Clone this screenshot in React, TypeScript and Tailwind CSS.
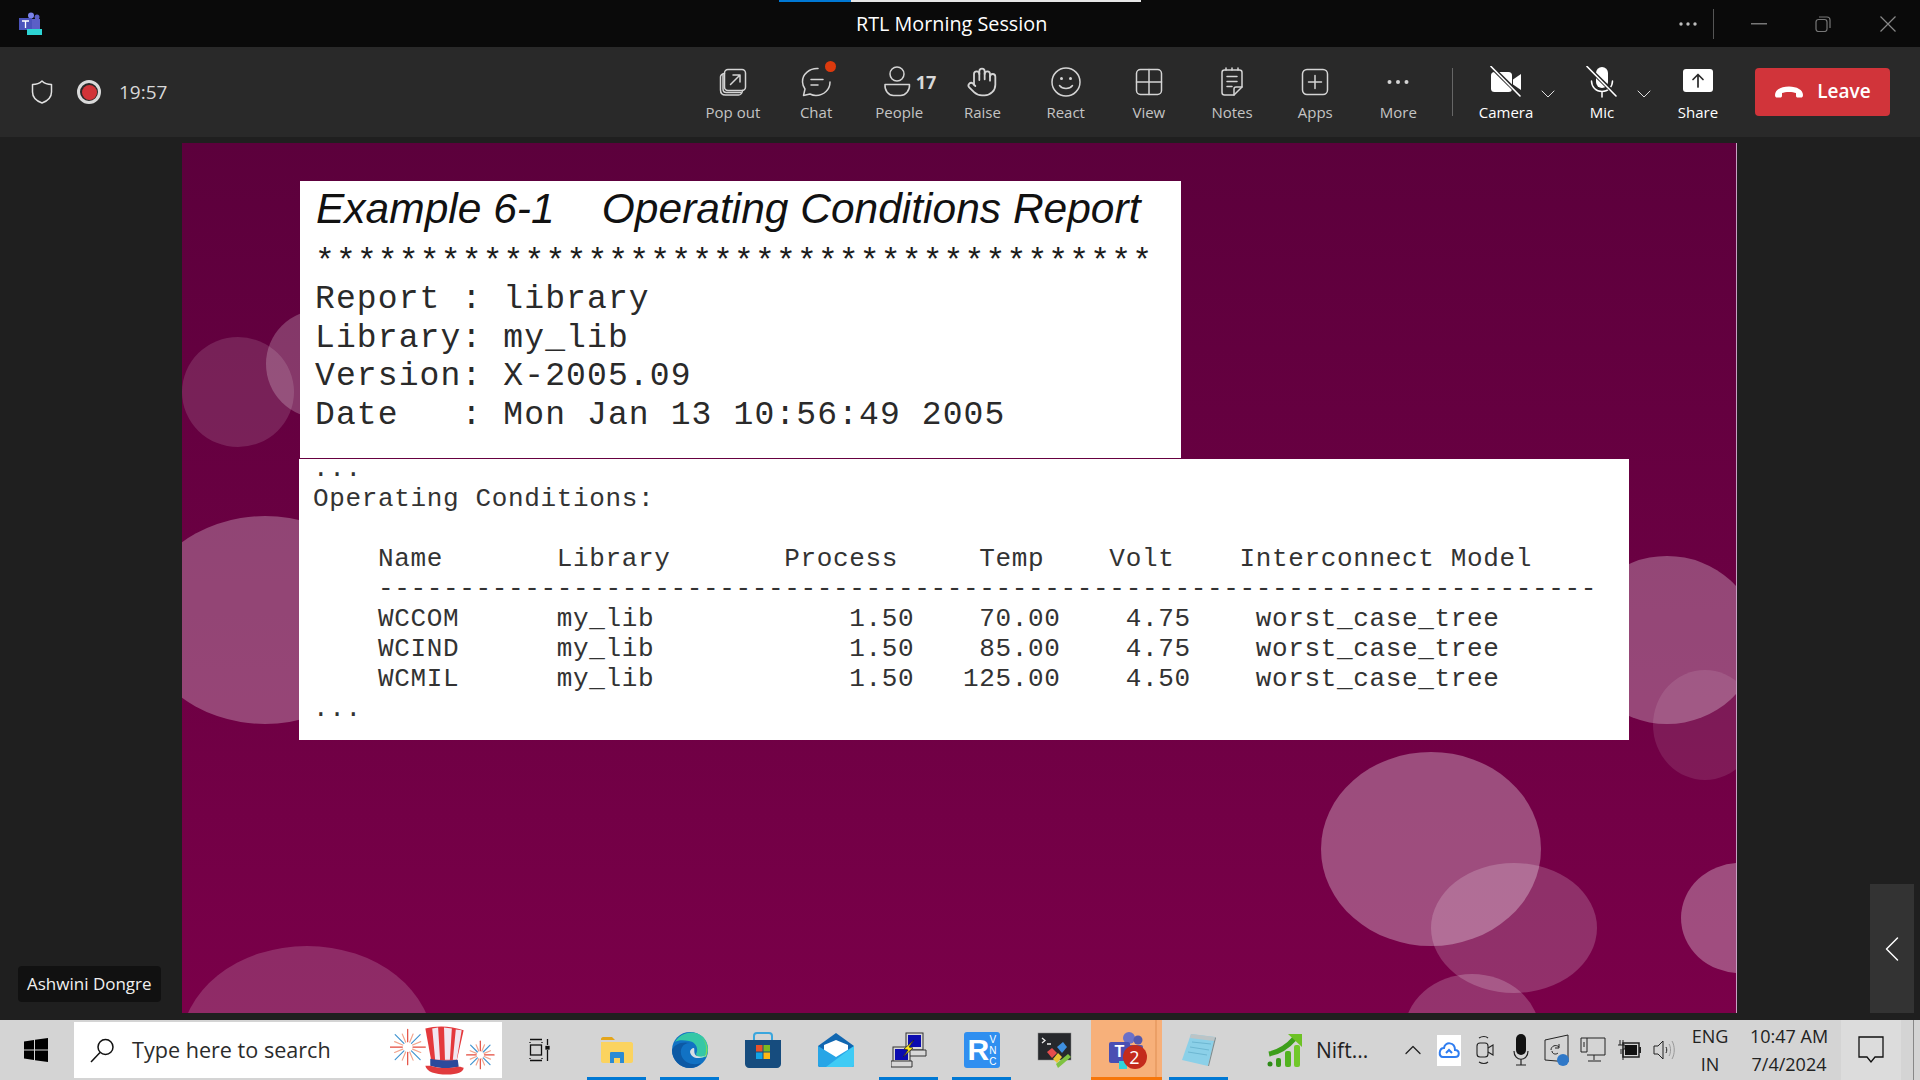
import { ReactNode } from "react";
import { ChevronLeft, ChevronDown, ChevronUp, Hand } from "lucide-react";

const stroke = "#d4d4d4";

function Ico({ children, w = 32, h = 32 }: { children: ReactNode; w?: number; h?: number }) {
  return (
    <svg width={w} height={h} viewBox={`0 0 ${w} ${h}`} fill="none" stroke={stroke} strokeWidth="1.5" strokeLinecap="round" strokeLinejoin="round">
      {children}
    </svg>
  );
}

const tools: { label: string; icon: ReactNode }[] = [
  {
    label: "Pop out",
    icon: (
      <Ico>
        <rect x="7.5" y="3.5" width="21" height="21" rx="3.5" />
        <path d="M7.5 7.5C5 8 3.5 9 3.5 11v13c0 3 2 5 5 5h13c2 0 3.5-1.5 4-4.5" />
        <path d="M6 9v14c0 2 1.500 3.500 3.500 3.500H24" />
        <path d="M13.500 18.500 23 9M16 9h7v7" />
      </Ico>
    ),
  },
  {
    label: "Chat",
    icon: (
      <div className="relative">
        <Ico>
          <path d="M18 2.500C10 2 2 8 2.500 16c.1 2.500 1 5 2.500 7L3.500 29.500 10 28c2 1 4 1.500 6 1.500 8 0 14-6 14-13.500" />
          <path d="M11 13.500h12M11 19h7" />
        </Ico>
        <span className="absolute right-[-4px] top-[-5px] h-[11px] w-[11px] rounded-full bg-[#dc3a0e]" />
      </div>
    ),
  },
  {
    label: "People",
    icon: (
      <div className="flex items-center gap-[5px] pl-[20px]">
        <Ico w={28}>
          <circle cx="14" cy="8" r="7" />
          <path d="M2 18.500h24.500c.5 6-4 11-9 11h-7c-5 0-9-5-8.500-11Z" />
        </Ico>
        <span className="w-[20px] text-[18px] leading-none font-bold text-[#d8d8d8]">17</span>
      </div>
    ),
  },
  { label: "Raise", icon: <Hand size={32} strokeWidth={1.35} color={stroke} /> },
  {
    label: "React",
    icon: (
      <Ico>
        <circle cx="16" cy="16" r="14" />
        <circle cx="11.500" cy="12.500" r="1.500" fill={stroke} stroke="none" />
        <circle cx="20.500" cy="12.500" r="1.500" fill={stroke} stroke="none" />
        <path d="M9.500 19.500c3 4 10 4 13 0" />
      </Ico>
    ),
  },
  {
    label: "View",
    icon: (
      <Ico>
        <rect x="3.500" y="3.500" width="25" height="25" rx="4" />
        <path d="M16 3.500v25M3.500 16h25" />
      </Ico>
    ),
  },
  {
    label: "Notes",
    icon: (
      <Ico>
        <path d="M18 29H8.500C7 29 6 28 6 26.500v-20C6 5 7 4 8.500 4h15C25 4 26 5 26 6.500V21l-8 8Z" />
        <path d="M10 2v2M16 2v2M22 2v2M11 10.500h10M11 15.500h10M11 20.500h5M18 29v-6c0-1 1-2 2-2h6" />
      </Ico>
    ),
  },
  {
    label: "Apps",
    icon: (
      <Ico>
        <rect x="3.500" y="3.500" width="25" height="25" rx="4.500" />
        <path d="M16 9.500v13M9.500 16h13" />
      </Ico>
    ),
  },
  {
    label: "More",
    icon: (
      <Ico>
        <circle cx="7.500" cy="16" r="2" fill={stroke} stroke="none" />
        <circle cx="16" cy="16" r="2" fill={stroke} stroke="none" />
        <circle cx="24.500" cy="16" r="2" fill={stroke} stroke="none" />
      </Ico>
    ),
  },
];

function CameraOff() {
  return (
    <svg width="32" height="32" viewBox="0 0 32 32">
      <rect x="1" y="6" width="21" height="20" rx="3.500" fill="#fff" />
      <path d="M23 13.500 31 8v16l-8-5.500Z" fill="#fff" />
      <path d="M1 0.500 31 30" stroke="#292929" strokeWidth="4" />
      <path d="M1 0.500 30 30" stroke="#fff" strokeWidth="1.600" strokeLinecap="round" />
    </svg>
  );
}

function MicOff() {
  return (
    <svg width="32" height="32" viewBox="0 0 32 32" fill="none">
      <rect x="10" y="1" width="12" height="21" rx="6" fill="#fff" />
      <path d="M5.500 15c0 6 4.500 10.500 10.500 10.500S26.500 21 26.500 15M16 25.500V31" stroke="#fff" strokeWidth="1.500" strokeLinecap="round" />
      <path d="M1 0.500 31 30" stroke="#292929" strokeWidth="4" />
      <path d="M1 0.500 30 30" stroke="#fff" strokeWidth="1.600" strokeLinecap="round" />
    </svg>
  );
}

function ShareIcon() {
  return (
    <svg width="32" height="32" viewBox="0 0 32 32" fill="none">
      <rect x="1" y="3" width="30" height="23" rx="3" fill="#fff" />
      <path d="M16 21V9M11 13.500 16 8.500l5 5" stroke="#292929" strokeWidth="1.700" strokeLinecap="round" strokeLinejoin="round" />
    </svg>
  );
}

function Fire({ cx, cy, r }: { cx: number; cy: number; r: number }) {
  const spokes = Array.from({ length: 16 }, (_, i) => (i * Math.PI) / 8);
  return (
    <g strokeWidth="1.200" strokeLinecap="round">
      {spokes.map((a, i) => (
        <line
          key={i}
          x1={cx + Math.cos(a) * r * 0.3}
          y1={cy + Math.sin(a) * r * 0.3}
          x2={cx + Math.cos(a) * r * (i % 2 ? 0.8 : 1)}
          y2={cy + Math.sin(a) * r * (i % 2 ? 0.8 : 1)}
          stroke={i % 4 === 0 ? "#e34a3c" : i % 4 === 2 ? "#3f93d0" : "#f2a58e"}
        />
      ))}
    </g>
  );
}

function HatDoodle() {
  return (
    <svg width="108" height="56" viewBox="0 0 110 56" className="shrink-0">
      <Fire cx={18} cy={25} r={18} />
      <Fire cx={92} cy={33} r={14} />
      <path d="M36 6c11-3 26-3 39 2l-7 31H42L36 6Z" fill="#e4393c" />
      <path d="M43 6l3 32h5L49 5ZM55 5l1 33h5l2-32ZM67 7l-3 31h4l5-30Z" fill="#f1e7f0" />
      <path d="M41 37c9 2 19 2 28 1l1 7c-9 2-20 2-29-1Z" fill="#2c4a9c" />
      <path d="M36 44c1 6 10 9 22 9 11 0 17-3 17-7-3-1-4-1-6-1-9 2-19 2-28-1Z" fill="#e13b3e" />
    </svg>
  );
}

function TaskIcon({ name }: { name: string }) {
  if (name === "taskview")
    return (
      <svg width="24" height="24" viewBox="0 0 24 24" fill="none" stroke="#111" strokeWidth="1.300">
        <path d="M1 1.500h12M1 22.500h12M1 5v-1M13 5v-1" />
        <rect x="1.500" y="7" width="11" height="10" />
        <path d="M1 21v-1M13 21v-1M18.500 1v6M18.500 12v11" />
        <rect x="17" y="8.500" width="3" height="2.500" fill="#111" />
      </svg>
    );
  if (name === "explorer")
    return (
      <svg width="34" height="28" viewBox="0 0 34 28">
        <path d="M1 3c0-1 1-2 2-2h9l3 3h-14Z" fill="#e4a51b" />
        <path d="M1 6h30c1 0 2 1 2 2v17c0 1-1 2-2 2H3c-1 0-2-1-2-2Z" fill="#fbd35f" />
        <path d="M10 27V17c0-1 1-1 1-1h12s1 0 1 1v10h-4v-5h-6v5Z" fill="#2a8bd4" />
      </svg>
    );
  if (name === "edge")
    return (
      <svg width="38" height="38" viewBox="0 0 38 38">
        <circle cx="19" cy="19" r="18" fill="#1172c4" />
        <path d="M4 11C9 2 22-2 31 5c6 5 8 14 4 20-3 3-9 2-10-2 3-5 0-12-7-13C12 9 7 9 4 11Z" fill="#35c7a6" />
        <path d="M34 26c2-7 2-15-4-20 6 4 8 14 5 20Z" fill="#7ed957" />
        <path d="M19 12c-8 0-11 7-8 14 3 6 11 9 19 6-2 3-7 5-11 5C9 37 1 29 1 19 3 14 10 10 19 12Z" fill="#0c59a4" />
        <path d="M23 17c1 2-1 6 3 8 3 1 7 1 9-1-1 2-5 3-8 3-4 0-7-2-8-6 0-2 2-4 4-4Z" fill="#d8dfe4" />
      </svg>
    );
  if (name === "store")
    return (
      <svg width="36" height="36" viewBox="0 0 36 36">
        <path d="M9 8V4c0-2 1-3 3-3h12c2 0 3 1 3 3v4" fill="none" stroke="#3aa6dd" strokeWidth="2" />
        <path d="M0 8h36v24c0 2-2 4-4 4H4c-2 0-4-2-4-4Z" fill="#164c7e" />
        <rect x="11" y="13" width="6.500" height="6.500" fill="#e9522a" />
        <rect x="18.500" y="13" width="6.500" height="6.500" fill="#7bba21" />
        <rect x="11" y="20.500" width="6.500" height="6.500" fill="#12a4e6" />
        <rect x="18.500" y="20.500" width="6.500" height="6.500" fill="#fdb813" />
      </svg>
    );
  if (name === "mail")
    return (
      <svg width="36" height="34" viewBox="0 0 36 34">
        <path d="M18 0 36 13v19c0 1-1 2-2 2H2c-1 0-2-1-2-2V13Z" fill="#1167b1" />
        <path d="M6 12 18 7l12 5v8l-12 7-12-7Z" fill="#fff" />
        <path d="M0 13 18 24 36 13v19c0 1-1 2-2 2H2c-1 0-2-1-2-2Z" fill="#27a5e6" />
        <path d="M36 13v19c0 1-1 2-2 2H8Z" fill="#3fcbf5" />
      </svg>
    );
  if (name === "putty")
    return (
      <svg width="36" height="36" viewBox="0 0 36 36">
        <rect x="15" y="1" width="17" height="17" fill="#d8d8d8" stroke="#333" />
        <rect x="17" y="3" width="13" height="12" fill="#0b0bb0" />
        <path d="M13 18h22v6H13Z" fill="#d8d8d8" stroke="#333" />
        <rect x="2" y="15" width="17" height="15" fill="#d8d8d8" stroke="#333" />
        <rect x="4" y="17" width="13" height="11" fill="#0b0bb0" />
        <path d="M0 29h21v6H0Z" fill="#d8d8d8" stroke="#333" />
        <path d="M23 8 13 17l4 1-5 7 10-9-4-1Z" fill="#ffe81a" stroke="#222" strokeWidth="0.700" />
      </svg>
    );
  if (name === "rvnc")
    return (
      <div className="relative flex h-[36px] w-[36px] items-center rounded-[3px] bg-[#2f8ff0] font-['Liberation_Sans',sans-serif] text-white">
        <span className="pl-[4px] text-[30px] leading-none font-bold">R</span>
        <span className="absolute right-[3px] top-[2px] flex flex-col text-center text-[10px] leading-[11px]">
          <span>V</span>
          <span>N</span>
          <span>C</span>
        </span>
      </div>
    );
  if (name === "term")
    return (
      <svg width="36" height="36" viewBox="0 0 36 36">
        <rect x="1" y="1" width="33" height="27" fill="#26282c" stroke="#888" strokeWidth="0.500" />
        <path d="M5 6l3 2.500-3 2.500M10 12h4" stroke="#eee" strokeWidth="1.300" fill="none" />
        <path d="M10 20l5-4 5 5-5 5Z" fill="#e54d4d" />
        <path d="M20 15l6-5 4 5-5 6Z" fill="#3f8fe0" />
        <path d="M16 27l5-6 4 4-5 6Z" fill="#e8c534" />
        <path d="M19 32l12-10 3 3-13 11Z" fill="#7fc241" />
      </svg>
    );
  if (name === "teams")
    return (
      <div className="relative h-[38px] w-[40px]">
        <svg width="40" height="38" viewBox="0 0 40 38" className="absolute left-0 top-0">
          <circle cx="22" cy="7" r="6" fill="#6a70c8" />
          <circle cx="31" cy="9" r="4.500" fill="#5459ad" />
          <rect x="16" y="14" width="20" height="18" rx="2" fill="#5459ad" />
          <rect x="2" y="11" width="21" height="21" rx="2" fill="#4a4fb3" />
          <rect x="12" y="30" width="8" height="8" fill="#31d3da" />
        </svg>
        <span className="absolute left-[8px] top-[13px] font-['Liberation_Sans',sans-serif] text-[16px] leading-[16px] font-bold text-white">T</span>
        <span className="absolute left-[16px] top-[14px] flex h-[24px] w-[24px] items-center justify-center rounded-full bg-[#c42b1c] text-[18px] leading-none text-white">2</span>
      </div>
    );
  return (
    <svg width="34" height="32" viewBox="0 0 34 32">
      <path d="M9 0 33 3 26 32 0 26Z" fill="#8bd0e8" />
      <path d="M26 32 33 3l1 1-7 28Z" fill="#7c8c90" />
      <path d="M9 0 33 3l-1 4L8 4Z" fill="#bcc4c6" />
      <path d="M10 8 29 10M8 13l19 3M6 18l19 3" stroke="#6db7d2" />
    </svg>
  );
}

function TrayIcon({ name }: { name: string }) {
  if (name === "chevron") return <ChevronUp size={28} strokeWidth={1.100} color="#222" />;
  if (name === "cloud")
    return (
      <div className="flex h-[31px] w-[24px] items-center justify-center bg-white">
        <svg width="22" height="18" viewBox="0 0 22 18" fill="none" stroke="#2f7df0" strokeWidth="2">
          <path d="M5 16h12c5 0 5-7 0-7 0-8-10-9-11-2-5 0-6 9-1 9ZM8 12l3-3 3 3" />
        </svg>
      </div>
    );
  if (name === "cam")
    return (
      <svg width="18" height="30" viewBox="0 0 18 30" fill="none" stroke="#222" strokeWidth="1.100">
        <path d="M3 3c3-2 7-2 9 0M3 27c3 2 7 2 9 0" />
        <rect x="1" y="8" width="11" height="14" rx="3" />
        <path d="M12 13l5-3v10l-5-3" />
      </svg>
    );
  if (name === "mic")
    return (
      <svg width="16" height="32" viewBox="0 0 16 32">
        <rect x="3" y="0" width="10" height="21" rx="5" fill="#111" />
        <path d="M1 17c0 11 14 11 14 0M8 25v6M3 31h10" fill="none" stroke="#222" strokeWidth="1.200" />
      </svg>
    );
  if (name === "sync")
    return (
      <svg width="26" height="32" viewBox="0 0 26 32" fill="none" stroke="#222" strokeWidth="1">
        <path d="M1 6 24 1v27L1 26Z" />
        <path d="M7 16c0-4 5-6 8-3M15 10v4h-4M14 19c-2 2-6 1-6-2" />
        <circle cx="19" cy="26" r="6" fill="#2f78c8" stroke="none" />
      </svg>
    );
  if (name === "net")
    return (
      <svg width="26" height="26" viewBox="0 0 26 26" fill="none" stroke="#222" strokeWidth="1">
        <path d="M7 1h18v17H7M7 1H1v14h6ZM4 5v5M14 18v5M8 24h13" />
      </svg>
    );
  if (name === "battery")
    return (
      <svg width="24" height="24" viewBox="0 0 24 24">
        <path d="M3 2v5M6 2v5M1 7h7v4H6v11M4 11v5" fill="none" stroke="#222" />
        <rect x="6" y="5" width="16" height="14" fill="none" stroke="#222" strokeWidth="1.500" />
        <rect x="8" y="7" width="12" height="10" fill="#111" />
        <rect x="22" y="9" width="2" height="6" fill="#222" />
      </svg>
    );
  return (
    <svg width="24" height="24" viewBox="0 0 24 24" fill="none" stroke="#222" strokeWidth="1">
      <path d="M1 8h4l5-5v18l-5-5H1Z" />
      <path d="M13 9c1 2 1 4 0 6" />
      <path d="M16 6c2 3 2 9 0 12M19 3c3 5 3 13 0 18" stroke="#999" />
    </svg>
  );
}

const taskItems = [
  { id: "explorer", bar: true },
  { id: "edge", bar: true },
  { id: "store", bar: false },
  { id: "mail", bar: false },
  { id: "putty", bar: true },
  { id: "rvnc", bar: true },
  { id: "term", bar: false },
];

const trayItems = ["chevron", "cloud", "cam", "mic", "sync", "net", "battery", "speaker"];

const reportLines = `Report : library
Library: my_lib
Version: X-2005.09
Date   : Mon Jan 13 10:56:49 2005`;

const tableLines = `...
Operating Conditions:

    Name       Library       Process     Temp    Volt    Interconnect Model
    ---------------------------------------------------------------------------
    WCCOM      my_lib            1.50    70.00    4.75    worst_case_tree
    WCIND      my_lib            1.50    85.00    4.75    worst_case_tree
    WCMIL      my_lib            1.50   125.00    4.50    worst_case_tree
...`;

function Slide() {
  return (
    <div className="relative h-[870px] w-[1555px] overflow-hidden border-r border-[#c9a0c4] bg-gradient-to-b from-[#5c003c] to-[#7a0049]">
      <svg className="absolute left-0 top-0" width="1554" height="870" viewBox="182 143 1554 870" fill="#fff">
        <ellipse cx="238" cy="392" rx="56" ry="55" opacity="0.13" />
        <ellipse cx="320" cy="364" rx="54" ry="54" opacity="0.22" />
        <ellipse cx="265" cy="620" rx="125" ry="104" opacity="0.27" />
        <ellipse cx="307" cy="1046" rx="126" ry="100" opacity="0.17" />
        <ellipse cx="1667" cy="640" rx="90" ry="84" opacity="0.28" />
        <ellipse cx="1705" cy="725" rx="52" ry="55" opacity="0.1" />
        <ellipse cx="1431" cy="849" rx="110" ry="97" opacity="0.3" />
        <ellipse cx="1514" cy="928" rx="83" ry="65" opacity="0.19" />
        <ellipse cx="1472" cy="1034" rx="68" ry="60" opacity="0.2" />
        <ellipse cx="1740" cy="918" rx="59" ry="55" opacity="0.3" />
      </svg>
      <div className="relative flex flex-col pt-[38px]">
        <div className="ml-[118px] h-[277px] w-[881px] bg-white pl-[15px] pt-[5px] text-[#1c1c1c]">
          <p className="pl-[1px] font-['Liberation_Sans',sans-serif] text-[42.500px] leading-[46px] whitespace-pre text-[#111] italic">Example 6-1    Operating Conditions Report</p>
          <p className="mt-[13px] font-['Liberation_Mono',monospace] text-[33px] leading-[36px] tracking-[1.150px] whitespace-pre">****************************************</p>
          <pre className="mt-0 font-['Liberation_Mono',monospace] text-[33px] leading-[38.500px] tracking-[1.120px] text-[#2a2a2a]">{reportLines}</pre>
        </div>
        <div className="mt-[1px] ml-[117px] h-[281px] w-[1330px] bg-white pl-[14px]">
          <pre className="-mt-[5px] font-['Liberation_Mono',monospace] text-[26px] leading-[30px] tracking-[0.650px] text-[#333]">{tableLines}</pre>
        </div>
      </div>
    </div>
  );
}

export default function App() {
  return (
    <div className="flex h-[1080px] w-[1920px] flex-col overflow-hidden bg-[#1f1f1f] font-['Open_Sans',sans-serif]">
      {/* title bar */}
      <div className="relative flex h-[47px] shrink-0 items-center bg-[#0a0a0a] pl-[18px]">
        <div className="absolute left-[779px] top-0 flex h-[2px] w-[362px]">
          <div className="w-[72px] bg-[#0078d4]" />
          <div className="flex-1 bg-[#e6e6e6]" />
        </div>
        <svg width="24" height="23" viewBox="0 0 24 23">
          <circle cx="13" cy="3.500" r="3" fill="#7b83eb" />
          <circle cx="19" cy="5" r="2.500" fill="#5b5fc7" />
          <rect x="9" y="7" width="13" height="11" fill="#5b5fc7" />
          <rect x="1" y="6" width="13" height="12" fill="#4b53bc" />
          <path d="M4 9h7M7.500 9v7" stroke="#fff" strokeWidth="1.300" />
          <rect x="9" y="17" width="15" height="6" fill="#2dd4d4" />
        </svg>
        <span className="absolute left-[856px] text-[19.800px] text-white">RTL Morning Session</span>
        <div className="ml-auto mr-[24px] flex items-center">
          <svg width="20" height="6" viewBox="0 0 20 6" fill="#bdbdbd">
            <circle cx="3" cy="3" r="1.700" />
            <circle cx="10" cy="3" r="1.700" />
            <circle cx="17" cy="3" r="1.700" />
          </svg>
          <div className="ml-[15px] h-[30px] w-px bg-[#555]" />
          <svg className="ml-[37px]" width="16" height="2"><rect width="16" height="1.500" fill="#777" /></svg>
          <svg className="ml-[48px]" width="16" height="16" viewBox="0 0 16 16" fill="none" stroke="#777" strokeWidth="1.200">
            <rect x="1" y="3.500" width="11" height="12" rx="2.500" />
            <path d="M4 1h8c2 0 3 1 3 3v8" />
          </svg>
          <svg className="ml-[49px]" width="16" height="16" viewBox="0 0 16 16" stroke="#888" strokeWidth="1.200"><path d="M0.500 0.500 15.500 15.500M15.500 0.500 0.500 15.500" /></svg>
        </div>
      </div>

      {/* toolbar */}
      <div className="flex h-[90px] shrink-0 items-center bg-[#292929] pl-[31px] pr-[30px]">
        <svg width="22" height="24" viewBox="0 0 22 24" fill="none" stroke="#e0e0e0" strokeWidth="1.500" strokeLinejoin="round">
          <path d="M11 1c2 2 6 3.500 9.500 3.500V12c0 5-4 9-9.500 11C5.500 21 1.500 17 1.500 12V4.500C5 4.500 9 3 11 1Z" />
        </svg>
        <div className="ml-[24px] flex h-[24px] w-[24px] items-center justify-center rounded-full border-[3px] border-[#dadada]">
          <div className="h-[15px] w-[15px] rounded-full bg-[#d13438]" />
        </div>
        <span className="ml-[18px] text-[19px] text-[#d8d8d8]">19:57</span>
        <div className="ml-auto flex items-start">
          {tools.map((t) => (
            <div key={t.label} className="flex w-[83.200px] flex-col items-center">
              <div className="mt-[3px] flex h-[32px] items-center justify-center">{t.icon}</div>
              <span className="mt-[4px] text-[15px] leading-[20px] text-[#c4c4c4]">{t.label}</span>
            </div>
          ))}
          <div className="ml-[12px] mt-[5px] h-[48px] w-px bg-[#666]" />
          <div className="ml-[5px] flex">
            {[
              { label: "Camera", icon: <CameraOff />, chevron: true },
              { label: "Mic", icon: <MicOff />, chevron: true },
              { label: "Share", icon: <ShareIcon />, chevron: false },
            ].map((c) => (
              <div key={c.label} className="relative flex w-[96px] flex-col items-center">
                <div className="mt-[3px] flex h-[32px] items-center justify-center">{c.icon}</div>
                <span className="mt-[4px] text-[15px] leading-[20px] text-white">{c.label}</span>
                {c.chevron && <ChevronDown size={24} strokeWidth={1} color="#e0e0e0" className="absolute right-[-6px] top-[19px]" />}
              </div>
            ))}
          </div>
          <div className="ml-[9px] mt-[5px] flex h-[48px] w-[135px] items-center justify-center gap-[13px] rounded-[4px] bg-[#d1343a] text-white">
            <svg width="30" height="16" viewBox="0 0 30 16" fill="#fff">
              <path d="M1 11C1 6 7 2.500 15 2.500S29 6 29 11c0 2-1 2.500-2 2.500h-3c-1.500 0-2-.5-2-2V9c-3-1.500-11-1.500-14 0v2.500c0 1.500-.5 2-2 2H3c-1 0-2-.5-2-2.500Z" />
            </svg>
            <span className="text-[19px] font-semibold">Leave</span>
          </div>
        </div>
      </div>

      {/* stage */}
      <div className="relative flex-1 pl-[182px] pt-[6px]">
        <Slide />
        <div className="absolute left-[18px] top-[829px] rounded-[4px] bg-[#111] px-[9px] py-[5px] text-[17px] leading-[26px] text-[#f0f0f0]">Ashwini Dongre</div>
        <div className="absolute bottom-[7px] right-[6px] flex h-[129px] w-[44px] items-center justify-center bg-[#333]">
          <ChevronLeft size={44} strokeWidth={0.8} color="#fff" />
        </div>
      </div>

      {/* windows taskbar */}
      <div className="flex h-[60px] shrink-0 items-center bg-[#d4d4d4] text-[#1a1a1a]">
        <div className="flex w-[74px] justify-center pr-[2px]">
          <svg width="24" height="24" viewBox="0 0 24 24" fill="#000">
            <path d="M0 3.500 10 2v9.500H0ZM11 1.800 24 0v11.500H11ZM0 12.500h10V22L0 20.500ZM11 12.500h13V24l-13-1.800Z" />
          </svg>
        </div>
        <div className="flex h-[56px] w-[428px] items-center bg-white pl-[16px] pr-[4px]">
          <svg width="25" height="25" viewBox="0 0 25 25" fill="none" stroke="#111" strokeWidth="1.500">
            <circle cx="15.500" cy="9" r="7.500" />
            <path d="M10 14.500 1 24" />
          </svg>
          <span className="ml-[17px] text-[21.600px] text-[#2b2b2b]">Type here to search</span>
          <div className="ml-auto flex">
            <HatDoodle />
          </div>
        </div>
        <div className="flex w-[75px] justify-center pl-[2px]">
          <TaskIcon name="taskview" />
        </div>
        <div className="ml-[3px] flex h-full">
          {taskItems.map((item) => (
            <div key={item.id} className="relative flex w-[73px] items-center justify-center">
              <TaskIcon name={item.id} />
              {item.bar && <div className="absolute bottom-0 left-[7px] h-[3px] w-[59px] bg-[#0078d4]" />}
            </div>
          ))}
          <div className="relative flex w-[71px] items-center justify-center bg-[#f7b07a]">
            <TaskIcon name="teams" />
            <div className="absolute inset-y-0 right-[5px] w-[2px] bg-[#eb9f66]" />
            <div className="absolute bottom-0 left-0 h-[3px] w-full bg-[#f7760a]" />
          </div>
          <div className="relative flex w-[73px] items-center justify-center">
            <TaskIcon name="notepad" />
            <div className="absolute bottom-0 left-[7px] h-[3px] w-[59px] bg-[#0078d4]" />
          </div>
        </div>
        <div className="ml-[32px] flex w-[128px] items-center">
          <svg width="36" height="36" viewBox="0 0 36 36">
            <circle cx="3" cy="32" r="2.500" fill="#2c8a17" />
            <rect x="9" y="26" width="5" height="9" rx="2" fill="#3b9a1a" />
            <rect x="18" y="19" width="6" height="16" rx="2" fill="#52b31f" />
            <rect x="27" y="13" width="6" height="22" rx="2" fill="#71c82a" />
            <path d="M2 22C12 20 22 13 28 6" fill="none" stroke="#3d9f1b" strokeWidth="5" />
            <path d="M21 2h14v13Z" fill="#6dc225" />
          </svg>
          <span className="ml-[13px] text-[21px] leading-none text-[#222]">Nift...</span>
        </div>
        <div className="flex">
          {trayItems.map((t) => (
            <div key={t} className="flex h-[36px] w-[36px] items-center justify-center">
              <TrayIcon name={t} />
            </div>
          ))}
        </div>
        <div className="flex w-[54px] flex-col items-center text-[18px] leading-[28px] text-[#222]">
          <span>ENG</span>
          <span>IN</span>
        </div>
        <div className="flex w-[104px] flex-col items-center text-[18px] leading-[28px] text-[#222]">
          <span>10:47 AM</span>
          <span>7/4/2024</span>
        </div>
        <div className="flex h-full w-[60px] items-center justify-center bg-[#dcdcdc]">
          <svg width="26" height="28" viewBox="0 0 26 28" fill="none" stroke="#111" strokeWidth="1.300">
            <path d="M1 1h24v20h-8l-4 5-4-5H1Z" />
          </svg>
        </div>
        <div className="flex h-full flex-1 justify-end pr-[6px]">
          <div className="h-full w-px bg-[#888]" />
        </div>
      </div>
    </div>
  );
}
